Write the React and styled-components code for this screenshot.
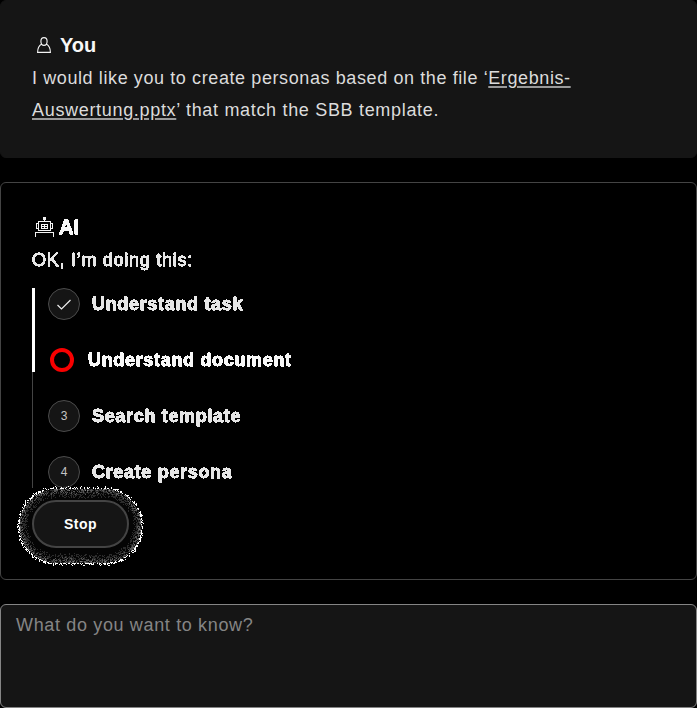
import React from "react";
import styled, { createGlobalStyle } from "styled-components";

const Global = createGlobalStyle`
  *, *::before, *::after { box-sizing: border-box; }
  body {
    margin: 0;
    background: #000;
    overflow: hidden;
    font-family: "Liberation Sans", Arial, Helvetica, sans-serif;
  }
`;

const Page = styled.main`
  display: flex;
  flex-direction: column;
  gap: 24px;
  height: 708px;
`;

const Card = styled.section`
  display: flex;
  flex-direction: column;
  flex: none;
  border-radius: 6px;
  padding: 0 31px;
  height: ${(p) => p.$height}px;
  border: 1px solid ${(p) => p.$border};
  background: ${(p) => p.$fill};
`;

const Crisp = styled.div`
  display: flex;
  flex-direction: column;
  filter: url(#crisp);
  -webkit-text-stroke: 0.45px currentColor;
`;

const Heading = styled.h2`
  display: flex;
  align-items: center;
  gap: ${(p) => p.$gap}px;
  height: 32px;
  margin: 28px 0 1px;
  padding-left: ${(p) => p.$indent}px;
  color: #f7f7f7;
  font-size: 20px;
  line-height: 32px;
`;

const Copy = styled.p`
  margin: 0;
  color: ${(p) => (p.$bright ? "#e6e6e6" : "#dcdcdc")};
  font-size: 18px;
  line-height: 32px;
  letter-spacing: ${(p) => p.$tracking}px;
  white-space: nowrap;
`;

const FileLink = styled.a`
  color: #dcdcdc;
  text-decoration: underline;
  text-decoration-color: #9a9a9a;
  text-decoration-thickness: 2px;
  text-underline-offset: 2px;
`;

const StepArea = styled.div`
  display: flex;
  gap: 13px;
  height: 200px;
  margin-top: 12px;
`;

const Rail = styled.div`
  display: flex;
  flex-direction: column;
  width: 3px;
  flex: none;
`;

const RailPart = styled.span`
  width: ${(p) => (p.$done ? 3 : 1)}px;
  height: ${(p) => (p.$done ? 84 : 116)}px;
  background: ${(p) => (p.$done ? "#fff" : "#444")};
`;

const StepList = styled.ol`
  display: flex;
  flex-direction: column;
  gap: 24px;
  list-style: none;
  margin: 0;
  padding: 0;
`;

const StepRow = styled.li`
  display: flex;
  align-items: center;
  height: 32px;
  gap: ${(p) => (p.$active ? 14 : 12)}px;
`;

const Marker = styled.span`
  display: flex;
  align-items: center;
  justify-content: center;
  width: 32px;
  height: 32px;
  border: 1px solid #4c4c4c;
  border-radius: 50%;
  background: #151515;
  color: #c4c4c4;
  font-size: 12px;
`;

const Spinner = styled.span`
  width: 24px;
  height: 24px;
  margin-left: 2px;
  border: 4px solid #f80000;
  border-radius: 50%;
`;

const StepLabel = styled.span`
  color: ${(p) => (p.$active ? "#f7f7f7" : "#e6e6e6")};
  font-size: 18px;
  font-weight: 700;
  line-height: 32px;
  letter-spacing: 0.67px;
  filter: url(#crisp);
  -webkit-text-stroke: 0.45px currentColor;
`;

const StopWrap = styled.div`
  position: relative;
  width: 97px;
  height: 48px;
  margin-top: 12px;
`;

const Halo = styled.svg`
  position: absolute;
  left: -16px;
  top: -14px;
`;

const StopButton = styled.button`
  position: relative;
  width: 97px;
  height: 48px;
  border: 2px solid #444;
  border-radius: 24px;
  background: #151515;
  color: #fff;
  padding: 0;
  font: 700 14px "Liberation Sans", Arial, sans-serif;
  letter-spacing: 0.5px;
`;

const Prompt = styled.textarea`
  display: block;
  flex: none;
  width: 100%;
  height: 104px;
  resize: none;
  outline: none;
  padding: 4px 15px;
  border: 1px solid #858585;
  border-radius: 6px;
  background: #151515;
  font: 18px/32px "Liberation Sans", Arial, sans-serif;
  letter-spacing: 0.65px;
  &::placeholder { color: #858585; opacity: 1; }
`;

const Defs = styled.svg`
  position: absolute;
`;

const HALO_W = 128;
const HALO_H = 80;

// Dithered glow: specks grow brighter and denser away from the button.
function buildGlow() {
  let seed = 7;
  const rand = () => {
    seed = (seed * 1664525 + 1013904223) >>> 0;
    return seed / 4294967296;
  };
  const levels = ["", "", "", "", "", ""];
  for (let y = 0; y < HALO_H; y++) {
    for (let x = 0; x < HALO_W; x++) {
      const dx = Math.max(0, Math.abs(x - 64) - 25);
      const dy = Math.abs(y - 39.5) * 0.98;
      const t = (Math.hypot(dx, dy) - 20) / 17.8;
      const limit = 1 + (rand() - 0.5) * 0.16;
      const a = rand();
      if (t < 0 || t > limit) continue;
      let v = a * Math.pow(t, 1.5) * 0.72;
      if (t > 0.9) v = a > 0.35 ? 1 : 0;
      const i = Math.min(5, Math.floor(v * 6));
      levels[i] += `M${x} ${y}h1v1h-1z`;
    }
  }
  return levels;
}

const GLOW = buildGlow();
const GREYS = ["#050505", "#2b2b2b", "#575757", "#818181", "#b0b0b0", "#fff"];

const Glow = () => (
  <Halo width={HALO_W} height={HALO_H} shapeRendering="crispEdges" aria-hidden="true">
    {GLOW.map((d, i) => <path key={i} d={d} fill={GREYS[i]} />)}
  </Halo>
);

const PersonIcon = () => (
  <svg width="14" height="16" viewBox="0 0 14 16" fill="none" stroke="#f3f3f3" strokeWidth="1.15">
    <path d="M7 .6C5.2.6 3.9 2 3.9 4.3S5.2 8.400 7 8.400s3.1-1.8 3.1-4.1S8.8.6 7 .6ZM4.700 7C2 8.500.6 11 .6 15.400h12.8C13.400 11 12 8.500 9.300 7" />
  </svg>
);

const RobotIcon = () => (
  <svg width="19" height="20" viewBox="0 0 19 20" fill="none" stroke="#f3f3f3" shapeRendering="crispEdges">
    <path d="M8 0h3v3H8z" fill="#f3f3f3" stroke="none" />
    <path d="M9.5 2v2M3.5 4.5h12v9h-12zM3 6.5H1.5v5H3M16 6.5h1.5v5H16M.5 20v-4.5h18V20M6.5 7.5h6v4h-6zM7 9.5h5M9.5 8v3" />
  </svg>
);

const CheckIcon = () => (
  <svg width="14" height="11" viewBox="0 0 14 11" fill="none" stroke="#eee" strokeWidth="1.2">
    <path d="M.5 6 4.5 10 13.5 1" />
  </svg>
);

const STEPS = [
  { label: "Understand task", state: "done" },
  { label: "Understand document", state: "active" },
  { label: "Search template", state: "open" },
  { label: "Create persona", state: "open" },
];

export default function App() {
  return (
    <>
      <Global />
      <Defs width="0" height="0" aria-hidden="true">
        <filter id="crisp" x="-5%" y="-5%" width="110%" height="110%" colorInterpolationFilters="sRGB">
          <feComponentTransfer>
            <feFuncA type="discrete" tableValues="0 0 1 1 1 1 1 1 1 1" />
          </feComponentTransfer>
        </filter>
      </Defs>
      <Page>
        <Card $height={158} $border="#151515" $fill="#151515">
          <Heading $indent={5} $gap={9}>
            <PersonIcon />
            You
          </Heading>
          <Copy $tracking={0.6}>
            I would like you to create personas based on the file ‘<FileLink>Ergebnis-</FileLink>
          </Copy>
          <Copy $tracking={0.68}>
            <FileLink>Auswertung.pptx</FileLink>’ that match the SBB template.
          </Copy>
        </Card>
        <Card $height={398} $border="#444" $fill="#000">
          <Crisp>
            <Heading $indent={3} $gap={5}>
              <RobotIcon />
              AI
            </Heading>
            <Copy $bright $tracking={0.73}>OK, I’m doing this:</Copy>
          </Crisp>
          <StepArea>
            <Rail>
              <RailPart $done />
              <RailPart />
            </Rail>
            <StepList>
              {STEPS.map(({ label, state }, i) => (
                <StepRow key={label} $active={state === "active"}>
                  {state === "active" ? (
                    <Spinner />
                  ) : (
                    <Marker>{state === "done" ? <CheckIcon /> : i + 1}</Marker>
                  )}
                  <StepLabel $active={state === "active"}>{label}</StepLabel>
                </StepRow>
              ))}
            </StepList>
          </StepArea>
          <StopWrap>
            <Glow />
            <StopButton>Stop</StopButton>
          </StopWrap>
        </Card>
        <Prompt placeholder="What do you want to know?" />
      </Page>
    </>
  );
}
